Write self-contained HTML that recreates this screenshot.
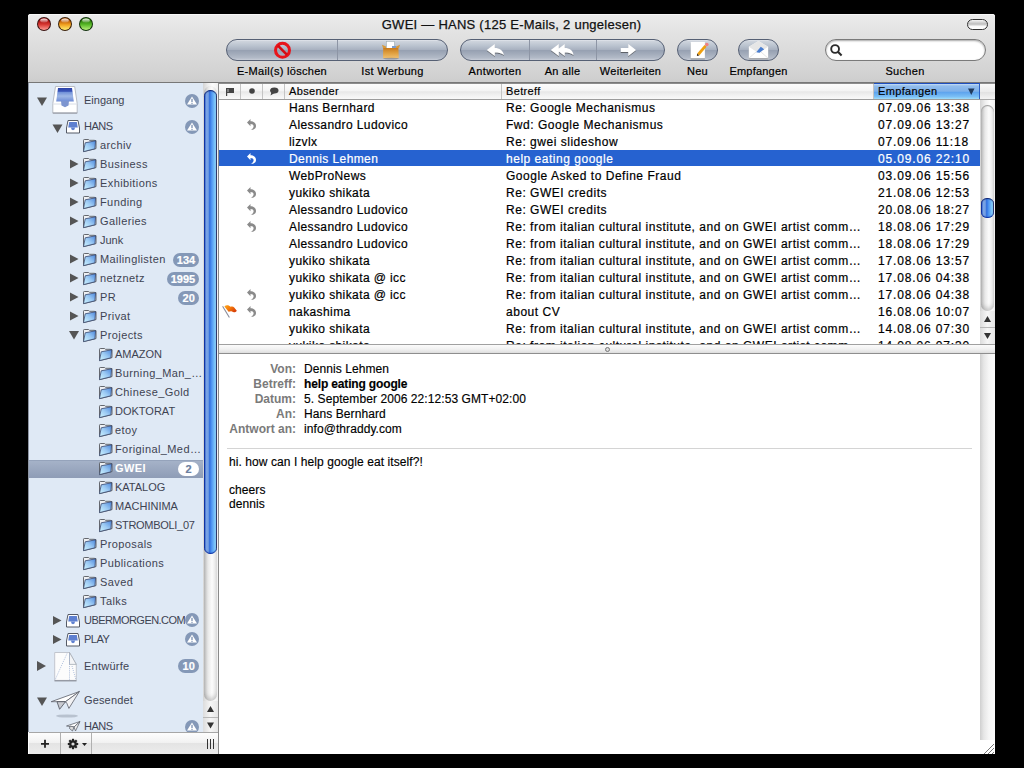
<!DOCTYPE html>
<html><head><meta charset="utf-8">
<style>
*{margin:0;padding:0;box-sizing:border-box}
html,body{width:1024px;height:768px;overflow:hidden;background:#000}
body{position:relative;font-family:"Liberation Sans",sans-serif;}
.a{position:absolute}
#win{left:28px;top:14px;width:967px;height:740px;background:#fff;overflow:hidden;border-radius:3px 3px 0 0}
#tb{left:28px;top:14px;width:967px;height:69px;background:linear-gradient(#ececec 0px,#e2e2e2 20px,#d2d2d2 60px,#cdcdcd 68px);border-radius:3px 3px 0 0;border-bottom:1px solid #777;box-shadow:inset 0 1px 0 #f8f8f8}
.light{width:14px;height:14px;border-radius:50%;top:17px}
#title{left:28px;width:967px;top:17px;text-align:center;font-size:13px;color:#111;letter-spacing:0.25px;line-height:15px;-webkit-text-stroke:0.25px #111}
.btn{height:22px;top:39px;border:1px solid #566074;border-radius:11px;background:linear-gradient(#e2e6ec 0px,#cdd3dc 1.5px,#b9c2ce 6px,#a9b2c1 9.5px,#97a1b2 10.5px,#a3acbb 14px,#b3bbc8 18px,#c8ced8 20px)}
.sep{width:1px;top:40px;height:20px;background:#8d95a5}
.lbl{top:65px;font-size:11px;color:#000;text-align:center;line-height:13px;white-space:nowrap;letter-spacing:0.3px;-webkit-text-stroke:0.2px #000}
/* sidebar */
#sb{left:28px;top:83px;width:175px;height:649px;background:#dfe9f5;border-left:1px solid #8e96a4;overflow:hidden}
.si{position:absolute;font-size:11px;color:#3e4352;white-space:nowrap;line-height:13px;letter-spacing:0.4px}
.badge{position:absolute;height:14px;border-radius:7px;background:#8498b7;color:#fff;font-weight:bold;font-size:11px;line-height:14px;text-align:center;-webkit-text-stroke:0.2px currentColor}
/* list */
#lst{left:219px;top:83px;width:761px;height:261px;background:#fff;overflow:hidden}
.row{position:absolute;left:0;width:761px;height:17px;font-size:12px;color:#000;white-space:nowrap;line-height:15px}
.row span{position:absolute;top:2px;letter-spacing:0.4px}
.hdr{background:linear-gradient(#fdfdfd,#f4f4f4 45%,#e8e8e8 52%,#f3f3f3 75%,#fbfbfb)}
.hdrsel{background:linear-gradient(#c8def6 0,#92bdec 12%,#7fb1ea 45%,#5ea4ee 52%,#7cc0f6 80%,#b2ecfc 100%);border-top:1px solid #1e4fc0;border-right:1px solid #2a5fc4}
.hd{font-size:11px;line-height:13px;color:#000;white-space:nowrap;letter-spacing:0.35px;-webkit-text-stroke:0.15px #000}
.rt{font-size:12px;line-height:14px;white-space:nowrap;letter-spacing:0.4px;-webkit-text-stroke:0.2px currentColor}
.dt{letter-spacing:0.85px}
.sj{letter-spacing:0.52px}
.vtrack{background:linear-gradient(90deg,#d4d4d4,#efefef 35%,#fdfdfd 65%,#f0f0f0)}
.vthumb{background:linear-gradient(90deg,#0a2c9e 0,#1c48b8 8%,#7aa4e6 14%,#76a0e2 32%,#2f6ede 44%,#4a90f0 56%,#86d0fc 88%,#34407a 94%,#3a3a4a 100%);box-shadow:inset 0 1px 1px #10206a,inset 0 -1px 1px #1030a0}
.mh{font-size:12px;line-height:14px;color:#7a7a7a;font-weight:bold;white-space:nowrap}
.mv{font-size:12px;line-height:14px;color:#000;white-space:nowrap;letter-spacing:0.08px;-webkit-text-stroke:0.15px #000}
</style></head><body>
<div id="win" class="a"></div>
<div id="tb" class="a"></div>
<svg class="a" style="left:30px;top:14px" width="70" height="22" viewBox="30 14 70 22">
 <defs>
  <linearGradient id="lr" x1="0" y1="0" x2="0" y2="1"><stop offset="0.2" stop-color="#a80c0c"/><stop offset="0.55" stop-color="#d83a34"/><stop offset="1" stop-color="#ff9c94"/></linearGradient>
  <linearGradient id="ly" x1="0" y1="0" x2="0" y2="1"><stop offset="0.2" stop-color="#b85200"/><stop offset="0.55" stop-color="#f0a020"/><stop offset="1" stop-color="#fff070"/></linearGradient>
  <linearGradient id="lg" x1="0" y1="0" x2="0" y2="1"><stop offset="0.2" stop-color="#2a7a08"/><stop offset="0.55" stop-color="#58b828"/><stop offset="1" stop-color="#b8f07a"/></linearGradient>
  <linearGradient id="lh" x1="0" y1="0" x2="0" y2="1"><stop offset="0" stop-color="#fff" stop-opacity="0.95"/><stop offset="1" stop-color="#fff" stop-opacity="0.1"/></linearGradient>
 </defs>
 <g transform="translate(44,24)"><circle r="7" fill="#3a1210"/><circle r="6" fill="url(#lr)"/><ellipse cy="-3.4" rx="3.8" ry="2.2" fill="url(#lh)"/></g>
 <g transform="translate(65,24)"><circle r="7" fill="#3a2008"/><circle r="6" fill="url(#ly)"/><ellipse cy="-3.4" rx="3.8" ry="2.2" fill="url(#lh)"/></g>
 <g transform="translate(86,24)"><circle r="7" fill="#10300a"/><circle r="6" fill="url(#lg)"/><ellipse cy="-3.4" rx="3.8" ry="2.2" fill="url(#lh)"/></g>
</svg>
<div id="title" class="a">GWEI — HANS (125 E-Mails, 2 ungelesen)</div>
<div class="a" style="left:967px;top:19px;width:20.5px;height:10.5px;border:1.5px solid #333;border-radius:6px;background:linear-gradient(#f4f4f4,#bdbdbd 45%,#fafafa 70%,#fff)"></div>

<!-- toolbar buttons -->
<div class="a btn" style="left:226px;width:222px"></div>
<div class="a sep" style="left:337px"></div>
<div class="a btn" style="left:460px;width:205px"></div>
<div class="a sep" style="left:529px"></div>
<div class="a sep" style="left:596px"></div>
<div class="a btn" style="left:677px;width:41px"></div>
<div class="a btn" style="left:738px;width:41px"></div>
<div class="a" style="left:825px;top:39px;width:161px;height:22px;border:1px solid #7a7a7a;border-radius:11px;background:#fff;box-shadow:inset 0 1px 2px rgba(0,0,0,.35)"></div>

<div class="a lbl" style="left:226px;width:112px">E-Mail(s) löschen</div>
<div class="a lbl" style="left:337px;width:111px;letter-spacing:0.3px">Ist Werbung</div>
<div class="a lbl" style="left:460px;width:70px;letter-spacing:0.4px">Antworten</div>
<div class="a lbl" style="left:529px;width:67px">An alle</div>
<div class="a lbl" style="left:596px;width:69px;letter-spacing:0.3px">Weiterleiten</div>
<div class="a lbl" style="left:677px;width:41px">Neu</div>
<div class="a lbl" style="left:718px;width:81px;letter-spacing:0.2px">Empfangen</div>
<div class="a lbl" style="left:855px;width:100px">Suchen</div>


<svg class="a" style="left:0;top:0" width="1024" height="100" viewBox="0 0 1024 100">
 <defs>
  <filter id="sh" x="-30%" y="-30%" width="160%" height="160%"><feDropShadow dx="0" dy="0.8" stdDeviation="0.6" flood-color="#333" flood-opacity="0.75"/></filter>
  <linearGradient id="bag" x1="0" y1="0" x2="0" y2="1"><stop offset="0" stop-color="#c87a1c"/><stop offset="0.5" stop-color="#e0a040"/><stop offset="1" stop-color="#f0c070"/></linearGradient>
 </defs>
 <!-- no sign -->
 <g transform="translate(282.5,50.3)">
  <circle r="7" fill="none" stroke="#e8141a" stroke-width="3"/>
  <line x1="-4.6" y1="-4.6" x2="4.6" y2="4.6" stroke="#d40c12" stroke-width="2.6"/>
 </g>
 <!-- junk bag -->
 <rect x="386.6" y="41.6" width="7.7" height="7" fill="#fff" stroke="#9aa" stroke-width="0.5"/>
 <rect x="392" y="46" width="4" height="2.5" fill="#7a9ccc"/>
 <path d="M382 44.7 L386 46.5 L386 48 L383 48 Z M400 44.7 L396 46.5 L396 48 L399 48 Z" fill="#d89a3a"/>
 <path d="M383.2 48 H398.4 L398.8 58.3 H383 Z" fill="url(#bag)"/>
 <ellipse cx="391" cy="58.6" rx="8" ry="0.8" fill="#6b6f7c" opacity="0.5"/>
 <!-- reply -->
 <path filter="url(#sh)" transform="translate(482,38)" d="M4.8 11.9 L12.8 5.9 L12.8 10 C17.5 10 21 12.2 21.9 17 C19.5 14.8 16 14.4 12.8 14.4 L12.8 18 Z" fill="#fff"/>
 <!-- reply all -->
 <path filter="url(#sh)" transform="translate(546,38)" d="M4.8 11.9 L12.8 5.9 L12.8 18 Z M10.8 11.9 L18.75 5.9 L18.75 10 C23.5 10 27 12.2 27.5 17 C25 14.8 22 14.4 18.75 14.4 L18.75 18 Z" fill="#fff"/>
 <!-- forward -->
 <path filter="url(#sh)" transform="translate(612,38)" d="M8.75 10 H16.25 V5.9 L24 11.9 L16.25 18 V14 H8.75 Z" fill="#fff"/>
 <!-- neu -->
 <rect x="690.7" y="41.9" width="14.2" height="16.4" fill="#fff" filter="url(#sh)"/>
 <path d="M697.2 53.6 L704.5 45 L706.6 46.8 L699.3 55.4 Z" fill="#f0a010"/>
 <path d="M697.2 53.6 L699.3 55.4 L696.9 56 Z" fill="#3a2a1a"/>
 <circle cx="706.8" cy="44.5" r="1.8" fill="#f08080"/>
 <!-- envelope -->
 <path d="M748.8 46.75 L758.5 41.1 L768.2 46.75 V58.3 H748.8 Z" fill="#fff" filter="url(#sh)"/>
 <path d="M748.8 46.75 L758.5 41.1 L768.2 46.75 L758.5 53 Z" fill="#e6e6e6"/>
 <path d="M756.2 52.2 L760.8 46.8 L764.2 49.2 L759.6 52.8 Z" fill="#4a7ed0"/>
 <path d="M748.8 58.3 L756 52 M768.2 58.3 L761 52" stroke="#ddd" stroke-width="0.8"/>
 <!-- search -->
 <circle cx="835.1" cy="49" r="3.9" fill="none" stroke="#2b2b2b" stroke-width="1.9"/>
 <line x1="837.9" y1="51.8" x2="841.6" y2="55.5" stroke="#2b2b2b" stroke-width="2.1"/>
</svg>


<div id="sb" class="a"></div>
<div class="a" style="left:29px;top:460px;width:174px;height:18px;background:linear-gradient(#a5b2c8,#8e9cb6);border-top:1px solid #95a3bb"></div>
<svg class="a" style="left:0;top:0" width="230" height="768" viewBox="0 0 230 768"><defs>
 <linearGradient id="fg" x1="0" y1="1" x2="1" y2="0"><stop offset="0" stop-color="#d0f6ff"/><stop offset="0.5" stop-color="#9ccaf4"/><stop offset="1" stop-color="#4a86dc"/></linearGradient>
 <g id="fold">
  <path d="M0.5 12.6 V1.3 Q0.5 0.5 1.3 0.5 H5.6 L6.4 1.3 H11 L13 1.6 V9.6 Z" fill="#eef0f3" stroke="#55585f" stroke-width="0.9"/>
  <path d="M0.5 12.6 L2.2 3.8 L12.6 1.8 L11.9 9.8 Z" fill="url(#fg)" stroke="#38486e" stroke-width="0.8"/>
 </g>
 <g id="warn">
  <circle r="7" fill="#8498b7"/>
  <path d="M0 -4.6 L5 3.6 H-5 Z" fill="#fff"/>
  <rect x="-0.7" y="-2.2" width="1.4" height="3.3" fill="#8498b7"/>
  <rect x="-0.7" y="1.9" width="1.4" height="1" fill="#8498b7"/>
 </g>
 <linearGradient id="ib" x1="0" y1="0" x2="0" y2="1"><stop offset="0" stop-color="#2b42a8"/><stop offset="0.25" stop-color="#3a55b8"/><stop offset="0.3" stop-color="#6f8fd8"/><stop offset="0.6" stop-color="#9fb8e6"/><stop offset="1" stop-color="#6e8cd6"/></linearGradient>
 <g id="inbox">
  <path d="M3.5 0.5 H22.7 L25.2 17.5 V27 H0.8 V17.5 Z" fill="#fff" stroke="#b8bcc4" stroke-width="1"/>
  <path d="M6 2 H20 L21.8 15.5 H4.2 Z" fill="url(#ib)"/>
  <path d="M0.8 18 H25.2" stroke="#d8dde6" stroke-width="1"/>
  <path d="M9 15 H17 L16.5 19.5 L13 21.2 L9.5 19.5 Z" fill="#7d95d0"/>
  <rect x="0.8" y="26.5" width="24.4" height="1.2" fill="#9a9ea8"/>
 </g>
 <g id="inboxs">
  <path d="M2 0.5 H12 L13.5 8 V13 H0.5 V8 Z" fill="#fff" stroke="#555a66" stroke-width="1"/>
  <path d="M3.2 2 H10.8 L11.8 7.5 H2.2 Z" fill="#5d7fd0"/>
  <path d="M5 7.5 H9 L8.5 9.5 L7 10.3 L5.5 9.5 Z" fill="#5d7fd0"/>
 </g>
 <g id="drafts">
  <path d="M0.7 0.5 H15.5 L22.3 12.4 V28.4 H0.7 Z" fill="#fcfcfc" stroke="#c2c6ce" stroke-width="1"/>
  <path d="M15.5 0.5 V12.4 H22.3 Z" fill="#f4f5f7" stroke="#9aa0aa" stroke-width="0.7"/>
  <path d="M15.5 1.5 V28 M13 1.5 L1 28 M18 14 L22 28" stroke="#9cb0d4" stroke-width="0.8" stroke-dasharray="1 1.1"/>
  <rect x="0.5" y="28.2" width="22" height="1.2" fill="#8a8e98"/>
 </g>
 <g id="sent">
  <path d="M1.2 11.7 L29.4 1.5 L15.5 11.7 Z" fill="#fff" stroke="#5a5e68" stroke-width="0.8" stroke-linejoin="round"/>
  <path d="M15.5 11.7 L29.4 1.5 L18.9 18.4 L16.8 13.2 Z" fill="#f2f2f4" stroke="#5a5e68" stroke-width="0.8" stroke-linejoin="round"/>
  <path d="M7 11.7 L15.5 11.7 L9.6 19.3 Z" fill="#c8cad0" stroke="#4a4e58" stroke-width="0.8" stroke-linejoin="round"/>
  <ellipse cx="17" cy="26" rx="11" ry="1.6" fill="#8a92a2" opacity="0.45"/>
 </g>
 <g id="sents">
  <path d="M0.5 5 L14 0.5 L8 6 Z" fill="#fff" stroke="#60646e" stroke-width="0.8"/>
  <path d="M8 6 L14 0.5 L9.5 10 Z" fill="#eee" stroke="#60646e" stroke-width="0.8"/>
  <path d="M4 5 L8 6 L6.5 10 L3.5 7.5 Z" fill="#ddd" stroke="#60646e" stroke-width="0.8"/>
 </g>
</defs>
<use href="#fold" x="83" y="139"/>
<use href="#fold" x="83" y="158"/>
<path d="M70 159.5 L78.5 164 L70 168.5 Z" fill="#555"/>
<use href="#fold" x="83" y="177"/>
<path d="M70 178.5 L78.5 183 L70 187.5 Z" fill="#555"/>
<use href="#fold" x="83" y="196"/>
<path d="M70 197.5 L78.5 202 L70 206.5 Z" fill="#555"/>
<use href="#fold" x="83" y="215"/>
<path d="M70 216.5 L78.5 221 L70 225.5 Z" fill="#555"/>
<use href="#fold" x="83" y="234"/>
<use href="#fold" x="83" y="253"/>
<path d="M70 254.5 L78.5 259 L70 263.5 Z" fill="#555"/>
<use href="#fold" x="83" y="272"/>
<path d="M70 273.5 L78.5 278 L70 282.5 Z" fill="#555"/>
<use href="#fold" x="83" y="291"/>
<path d="M70 292.5 L78.5 297 L70 301.5 Z" fill="#555"/>
<use href="#fold" x="83" y="310"/>
<path d="M70 311.5 L78.5 316 L70 320.5 Z" fill="#555"/>
<use href="#fold" x="83" y="329"/>
<path d="M69 331 L79 331 L74 339.5 Z" fill="#555"/>
<use href="#fold" x="99" y="348"/>
<use href="#fold" x="99" y="367"/>
<use href="#fold" x="99" y="386"/>
<use href="#fold" x="99" y="405"/>
<use href="#fold" x="99" y="424"/>
<use href="#fold" x="99" y="443"/>
<use href="#fold" x="99" y="462"/>
<use href="#fold" x="99" y="481"/>
<use href="#fold" x="99" y="500"/>
<use href="#fold" x="99" y="519"/>
<use href="#fold" x="83" y="538"/>
<use href="#fold" x="83" y="557"/>
<use href="#fold" x="83" y="576"/>
<use href="#fold" x="83" y="595"/>
<use href="#inbox" x="52" y="86"/>
<path d="M37 97.5 L47 97.5 L42 106.0 Z" fill="#555"/>
<use href="#warn" x="192" y="101"/>
<use href="#inboxs" x="66" y="120"/>
<path d="M52.5 124.5 L62.5 124.5 L57.5 133.0 Z" fill="#555"/>
<use href="#warn" x="192" y="127"/>
<use href="#inboxs" x="66" y="614"/>
<path d="M53 616.0 L61.5 620.5 L53 625.0 Z" fill="#555"/>
<use href="#warn" x="192" y="620"/>
<use href="#inboxs" x="66" y="633"/>
<path d="M53 635.0 L61.5 639.5 L53 644.0 Z" fill="#555"/>
<use href="#warn" x="192" y="639"/>
<use href="#drafts" x="54" y="652"/>
<path d="M37 661 L46 666 L37 671 Z" fill="#555"/>
<use href="#sent" x="50" y="690"/>
<path d="M37 697.5 L47 697.5 L42 706.0 Z" fill="#555"/>
<use href="#sents" x="66" y="721"/>
<use href="#warn" x="192" y="727"/>
</svg>
<div class="si" style="left:100px;top:139px;">archiv</div>
<div class="si" style="left:100px;top:158px;">Business</div>
<div class="si" style="left:100px;top:177px;">Exhibitions</div>
<div class="si" style="left:100px;top:196px;">Funding</div>
<div class="si" style="left:100px;top:215px;">Galleries</div>
<div class="si" style="left:100px;top:234px;;letter-spacing:0px">Junk</div>
<div class="si" style="left:100px;top:253px;">Mailinglisten</div>
<div class="badge" style="left:173.0px;top:252.5px;width:26.0px;background:#8498b7;color:#fff">134</div>
<div class="si" style="left:100px;top:272px;">netznetz</div>
<div class="badge" style="left:167.0px;top:271.5px;width:32.0px;background:#8498b7;color:#fff">1995</div>
<div class="si" style="left:100px;top:291px;">PR</div>
<div class="badge" style="left:178.4px;top:290.5px;width:20.6px;background:#8498b7;color:#fff">20</div>
<div class="si" style="left:100px;top:310px;">Privat</div>
<div class="si" style="left:100px;top:329px;">Projects</div>
<div class="si" style="left:115px;top:348px;;letter-spacing:0px">AMAZON</div>
<div class="si" style="left:115px;top:367px;">Burning_Man_…</div>
<div class="si" style="left:115px;top:386px;">Chinese_Gold</div>
<div class="si" style="left:115px;top:405px;;letter-spacing:0px">DOKTORAT</div>
<div class="si" style="left:115px;top:424px;">etoy</div>
<div class="si" style="left:115px;top:443px;">Foriginal_Med…</div>
<div class="si" style="left:115px;top:462px;font-weight:bold;color:#fff">GWEI</div>
<div class="badge" style="left:178.0px;top:461.5px;width:21.0px;background:#fff;color:#6c7fa0">2</div>
<div class="si" style="left:115px;top:481px;;letter-spacing:0px">KATALOG</div>
<div class="si" style="left:115px;top:500px;;letter-spacing:0px">MACHINIMA</div>
<div class="si" style="left:115px;top:519px;;letter-spacing:-0.3px">STROMBOLI_07</div>
<div class="si" style="left:100px;top:538px;">Proposals</div>
<div class="si" style="left:100px;top:557px;">Publications</div>
<div class="si" style="left:100px;top:576px;">Saved</div>
<div class="si" style="left:100px;top:595px;">Talks</div>
<div class="si" style="left:84px;top:94px;;letter-spacing:0px">Eingang</div>
<div class="si" style="left:84px;top:120px;;letter-spacing:-0.5px">HANS</div>
<div class="si" style="left:84px;top:614px;width:101px;overflow:hidden;letter-spacing:-0.55px">UBERMORGEN.COM</div>
<div class="si" style="left:84px;top:633px;;letter-spacing:-0.5px">PLAY</div>
<div class="si" style="left:84px;top:660px;;letter-spacing:0.25px">Entwürfe</div>
<div class="badge" style="left:178.4px;top:659.0px;width:20.6px;background:#8498b7;color:#fff">10</div>
<div class="si" style="left:84px;top:694px;;letter-spacing:0.15px">Gesendet</div>
<div class="si" style="left:84px;top:720px;;letter-spacing:-0.5px">HANS</div>


<div class="a" style="left:219px;top:83px;width:761px;height:261px;background:#fff;overflow:hidden">
<div class="a hdr" style="left:0;top:0;width:761px;height:17px"></div>
<div class="a" style="left:0;top:0;width:776px;height:1px;background:#8c8c8c"></div>
<div class="a hdrsel" style="left:655px;top:0;width:106px;height:17px"></div>
<div class="a" style="left:21px;top:1px;width:1px;height:15px;background:#c4c4c4"></div>
<div class="a" style="left:43px;top:1px;width:1px;height:15px;background:#c4c4c4"></div>
<div class="a" style="left:65px;top:1px;width:1px;height:15px;background:#c4c4c4"></div>
<div class="a" style="left:282px;top:1px;width:1px;height:15px;background:#c4c4c4"></div>
<div class="a" style="left:654px;top:1px;width:1px;height:15px;background:#c4c4c4"></div>
<div class="a" style="left:0;top:16px;width:761px;height:1px;background:#9c9c9c"></div>
<div class="a hd" style="left:70px;top:2px">Absender</div>
<div class="a hd" style="left:287px;top:2px">Betreff</div>
<div class="a hd" style="left:659px;top:2px">Empfangen</div>
<svg class="a" style="left:749px;top:5px" width="8" height="8"><path d="M0 0.5 H6.5 L3.25 7 Z" fill="#203a5c"/></svg>
<div class="a rt" style="left:70px;top:18px;color:#000">Hans Bernhard</div>
<div class="a rt sj" style="left:287px;top:18px;color:#000">Re: Google Mechanismus</div>
<div class="a rt dt" style="left:659px;top:18px;color:#000">07.09.06 13:38</div>
<div class="a rt" style="left:70px;top:35px;color:#000">Alessandro Ludovico</div>
<div class="a rt sj" style="left:287px;top:35px;color:#000">Fwd: Google Mechanismus</div>
<div class="a rt dt" style="left:659px;top:35px;color:#000">07.09.06 13:27</div>
<div class="a rt" style="left:70px;top:52px;color:#000">lizvlx</div>
<div class="a rt sj" style="left:287px;top:52px;color:#000">Re: gwei slideshow</div>
<div class="a rt dt" style="left:659px;top:52px;color:#000">07.09.06 11:18</div>
<div class="a" style="left:0;top:67px;width:761px;height:16px;background:#2662d0"></div>
<div class="a rt" style="left:70px;top:69px;color:#fff">Dennis Lehmen</div>
<div class="a rt sj" style="left:287px;top:69px;color:#fff">help eating google</div>
<div class="a rt dt" style="left:659px;top:69px;color:#fff">05.09.06 22:10</div>
<div class="a rt" style="left:70px;top:86px;color:#000">WebProNews</div>
<div class="a rt sj" style="left:287px;top:86px;color:#000">Google Asked to Define Fraud</div>
<div class="a rt dt" style="left:659px;top:86px;color:#000">03.09.06 15:56</div>
<div class="a rt" style="left:70px;top:103px;color:#000">yukiko shikata</div>
<div class="a rt sj" style="left:287px;top:103px;color:#000">Re: GWEI credits</div>
<div class="a rt dt" style="left:659px;top:103px;color:#000">21.08.06 12:53</div>
<div class="a rt" style="left:70px;top:120px;color:#000">Alessandro Ludovico</div>
<div class="a rt sj" style="left:287px;top:120px;color:#000">Re: GWEI credits</div>
<div class="a rt dt" style="left:659px;top:120px;color:#000">20.08.06 18:27</div>
<div class="a rt" style="left:70px;top:137px;color:#000">Alessandro Ludovico</div>
<div class="a rt sj" style="left:287px;top:137px;color:#000">Re: from italian cultural institute, and on GWEI artist comm…</div>
<div class="a rt dt" style="left:659px;top:137px;color:#000">18.08.06 17:29</div>
<div class="a rt" style="left:70px;top:154px;color:#000">Alessandro Ludovico</div>
<div class="a rt sj" style="left:287px;top:154px;color:#000">Re: from italian cultural institute, and on GWEI artist comm…</div>
<div class="a rt dt" style="left:659px;top:154px;color:#000">18.08.06 17:29</div>
<div class="a rt" style="left:70px;top:171px;color:#000">yukiko shikata</div>
<div class="a rt sj" style="left:287px;top:171px;color:#000">Re: from italian cultural institute, and on GWEI artist comm…</div>
<div class="a rt dt" style="left:659px;top:171px;color:#000">17.08.06 13:57</div>
<div class="a rt" style="left:70px;top:188px;color:#000">yukiko shikata @ icc</div>
<div class="a rt sj" style="left:287px;top:188px;color:#000">Re: from italian cultural institute, and on GWEI artist comm…</div>
<div class="a rt dt" style="left:659px;top:188px;color:#000">17.08.06 04:38</div>
<div class="a rt" style="left:70px;top:205px;color:#000">yukiko shikata @ icc</div>
<div class="a rt sj" style="left:287px;top:205px;color:#000">Re: from italian cultural institute, and on GWEI artist comm…</div>
<div class="a rt dt" style="left:659px;top:205px;color:#000">17.08.06 04:38</div>
<div class="a rt" style="left:70px;top:222px;color:#000">nakashima</div>
<div class="a rt sj" style="left:287px;top:222px;color:#000">about CV</div>
<div class="a rt dt" style="left:659px;top:222px;color:#000">16.08.06 10:07</div>
<div class="a rt" style="left:70px;top:239px;color:#000">yukiko shikata</div>
<div class="a rt sj" style="left:287px;top:239px;color:#000">Re: from italian cultural institute, and on GWEI artist comm…</div>
<div class="a rt dt" style="left:659px;top:239px;color:#000">14.08.06 07:30</div>
<div class="a rt" style="left:70px;top:256px;color:#000">yukiko shikata</div>
<div class="a rt sj" style="left:287px;top:256px;color:#000">Re: from italian cultural institute, and on GWEI artist comm…</div>
<div class="a rt dt" style="left:659px;top:256px;color:#000">14.08.06 07:30</div>
</div>
<svg class="a" style="left:0;top:0" width="1024" height="360" viewBox="0 0 1024 360"><defs>
 <path id="rep" d="M0 3.6 L3.5 0 V2.3 C6.6 2.3 9 4.2 9 6.9 C9 9.4 7 10.9 3.6 10.8 C5.6 10.1 6.6 8.9 6.6 7.3 C6.6 5.9 5.3 5 3.5 5 V7.2 Z"/>
 <g id="flag">
  <linearGradient id="flg" x1="0" y1="0" x2="1" y2="0.6"><stop offset="0" stop-color="#ffa818"/><stop offset="0.5" stop-color="#f47a0c"/><stop offset="1" stop-color="#d84008"/></linearGradient>
  <path d="M0.6 -0.8 L7.4 10.5" stroke="#8a8c9a" stroke-width="1.1"/>
  <path d="M2.4 -0.6 C4 -2.4 7 -2.2 8.6 -0.2 C10 -1 11.4 -0.6 12.2 0.6 L14.8 3.8 C13.5 5.6 11.5 5.8 10 4.6 C9 3.8 8 4.4 6.6 4.8 Z" fill="url(#flg)"/>
 </g>
</defs>
<rect x="226" y="88" width="1.2" height="8" fill="#444"/>
<rect x="226" y="88" width="8" height="5" fill="#444"/>
<rect x="227.5" y="89" width="1" height="3" fill="#bbb"/>
<circle cx="252" cy="91" r="2.8" fill="#444"/>
<ellipse cx="274.3" cy="90.5" rx="4.2" ry="3" fill="#444"/>
<path d="M271.5 92 L270.5 95.5 L275 92.8 Z" fill="#444"/>
<use href="#rep" x="247" y="119" fill="#8a8a8a" style="fill:#8a8a8a"/>
<use href="#rep" x="247" y="153" fill="#fff" style="fill:#fff"/>
<use href="#rep" x="247" y="187" fill="#8a8a8a" style="fill:#8a8a8a"/>
<use href="#rep" x="247" y="204" fill="#8a8a8a" style="fill:#8a8a8a"/>
<use href="#rep" x="247" y="221" fill="#8a8a8a" style="fill:#8a8a8a"/>
<use href="#rep" x="247" y="289" fill="#8a8a8a" style="fill:#8a8a8a"/>
<use href="#rep" x="247" y="306" fill="#8a8a8a" style="fill:#8a8a8a"/>
<use href="#flag" x="222" y="307"/></svg>

<!-- list scrollbar -->
<div class="a" style="left:980px;top:83px;width:15px;height:17px;background:linear-gradient(#fafafa,#ececec 50%,#e0e0e0 51%,#f4f4f4);border-top:1px solid #8c8c8c;border-bottom:1px solid #a8a8a8"></div>
<div class="a vtrack" style="left:980px;top:100px;width:15px;height:244px"></div>
<div class="a" style="left:981px;top:105px;width:13px;height:206px;border-radius:6.5px;background:linear-gradient(90deg,#c4c4c4,#e8e8e8 30%,#fbfbfb 60%,#ececec);box-shadow:inset 0 1px 1px #999,inset 0 -3px 4px rgba(0,0,0,.18)"></div>
<div class="a vthumb" style="left:981px;top:198px;width:13px;height:20px;border-radius:6px"></div>
<div class="a" style="left:980px;top:311px;width:15px;height:33px;background:linear-gradient(90deg,#dcdcdc,#f6f6f6 50%,#e6e6e6)"></div>
<div class="a" style="left:980px;top:327px;width:15px;height:1px;background:#b8b8b8"></div>
<svg class="a" style="left:980px;top:311px" width="15" height="33"><path d="M4 11 L7.5 5 L11 11 Z" fill="#333"/><path d="M4 22 L11 22 L7.5 28 Z" fill="#333"/></svg>

<!-- sidebar scrollbar -->
<div class="a vtrack" style="left:203px;top:83px;width:15px;height:649px"></div>
<div class="a" style="left:204px;top:86px;width:13px;height:615px;border-radius:6.5px;background:linear-gradient(90deg,#c4c4c4,#e8e8e8 30%,#fbfbfb 60%,#ececec);box-shadow:inset 0 -3px 4px rgba(0,0,0,.18)"></div>
<div class="a vthumb" style="left:204px;top:90px;width:13px;height:464px;border-radius:6.5px"></div>
<div class="a" style="left:203px;top:701px;width:15px;height:31px;background:linear-gradient(90deg,#dcdcdc,#f6f6f6 50%,#e6e6e6)"></div>
<div class="a" style="left:203px;top:717px;width:15px;height:1px;background:#b8b8b8"></div>
<svg class="a" style="left:203px;top:701px" width="15" height="31"><path d="M4 11 L7.5 5 L11 11 Z" fill="#333"/><path d="M4 21.5 L11 21.5 L7.5 27.5 Z" fill="#333"/></svg>
<div class="a" style="left:218px;top:83px;width:1px;height:671px;background:#8a8a8a"></div>

<!-- sidebar bottom bar -->
<div class="a" style="left:29px;top:732px;width:189px;height:22px;background:linear-gradient(#fdfdfd,#f2f2f2 45%,#e4e4e4 50%,#ececec);border-top:1px solid #a6a6a6"></div>
<div class="a" style="left:60px;top:733px;width:1px;height:21px;background:#b0b0b0"></div>
<div class="a" style="left:91px;top:733px;width:1px;height:21px;background:#b0b0b0"></div>
<svg class="a" style="left:28px;top:732px" width="190" height="22">
 <path d="M13 11.8 H21 M17 7.8 V15.8" stroke="#222" stroke-width="1.8"/>
 <g transform="translate(45,12)" fill="#222"><circle r="3.8"/><g stroke="#222" stroke-width="2.2"><line x1="0" y1="-5.2" x2="0" y2="5.2"/><line x1="-5.2" y1="0" x2="5.2" y2="0"/><line x1="-3.7" y1="-3.7" x2="3.7" y2="3.7"/><line x1="-3.7" y1="3.7" x2="3.7" y2="-3.7"/></g><circle r="1.6" fill="#ddd"/></g>
 <path d="M54 11 H59 L56.5 14 Z" fill="#222"/>
 <path d="M179.5 7 V17 M182.5 7 V17 M185.5 7 V17" stroke="#333" stroke-width="1"/>
</svg>



<!-- split bar -->
<div class="a" style="left:219px;top:344px;width:776px;height:10px;background:linear-gradient(#fbfbfb,#f1f1f1 50%,#e3e3e3 90%,#dadada);border-top:1px solid #a0a0a0;border-bottom:1px solid #8e8e8e"></div>
<div class="a" style="left:605px;top:347px;width:5px;height:5px;border-radius:50%;border:1px solid #777;background:#ddd"></div>
<!-- message view scroll gutter -->
<div class="a" style="left:980px;top:354px;width:15px;height:386px;background:linear-gradient(90deg,#cfcfcf,#e6e6e6 25%,#f6f6f6 60%,#fafafa)"></div>
<svg class="a" style="left:980px;top:740px" width="15" height="14"><path d="M14 4 L4 14 M14 8 L8 14 M14 12 L12 14" stroke="#777" stroke-width="1"/></svg>
<div class="a mh" style="left:219px;top:362px;width:77px;text-align:right">Von:</div>
<div class="a mh" style="left:219px;top:377px;width:77px;text-align:right">Betreff:</div>
<div class="a mh" style="left:219px;top:392px;width:77px;text-align:right">Datum:</div>
<div class="a mh" style="left:219px;top:407px;width:77px;text-align:right">An:</div>
<div class="a mh" style="left:219px;top:422px;width:77px;text-align:right">Antwort an:</div>
<div class="a mv" style="left:304px;top:362px">Dennis Lehmen</div>
<div class="a mv" style="left:304px;top:377px;font-weight:bold;letter-spacing:-0.15px">help eating google</div>
<div class="a mv" style="left:304px;top:392px">5. September 2006 22:12:53 GMT+02:00</div>
<div class="a mv" style="left:304px;top:407px">Hans Bernhard</div>
<div class="a mv" style="left:304px;top:422px">info@thraddy.com</div>
<div class="a" style="left:227px;top:448px;width:745px;height:1px;background:#d4d4d4"></div>
<div class="a mv" style="left:229px;top:455px;line-height:14px">hi. how can I help google eat itself?!<br><br>cheers<br>dennis</div>


</body></html>
